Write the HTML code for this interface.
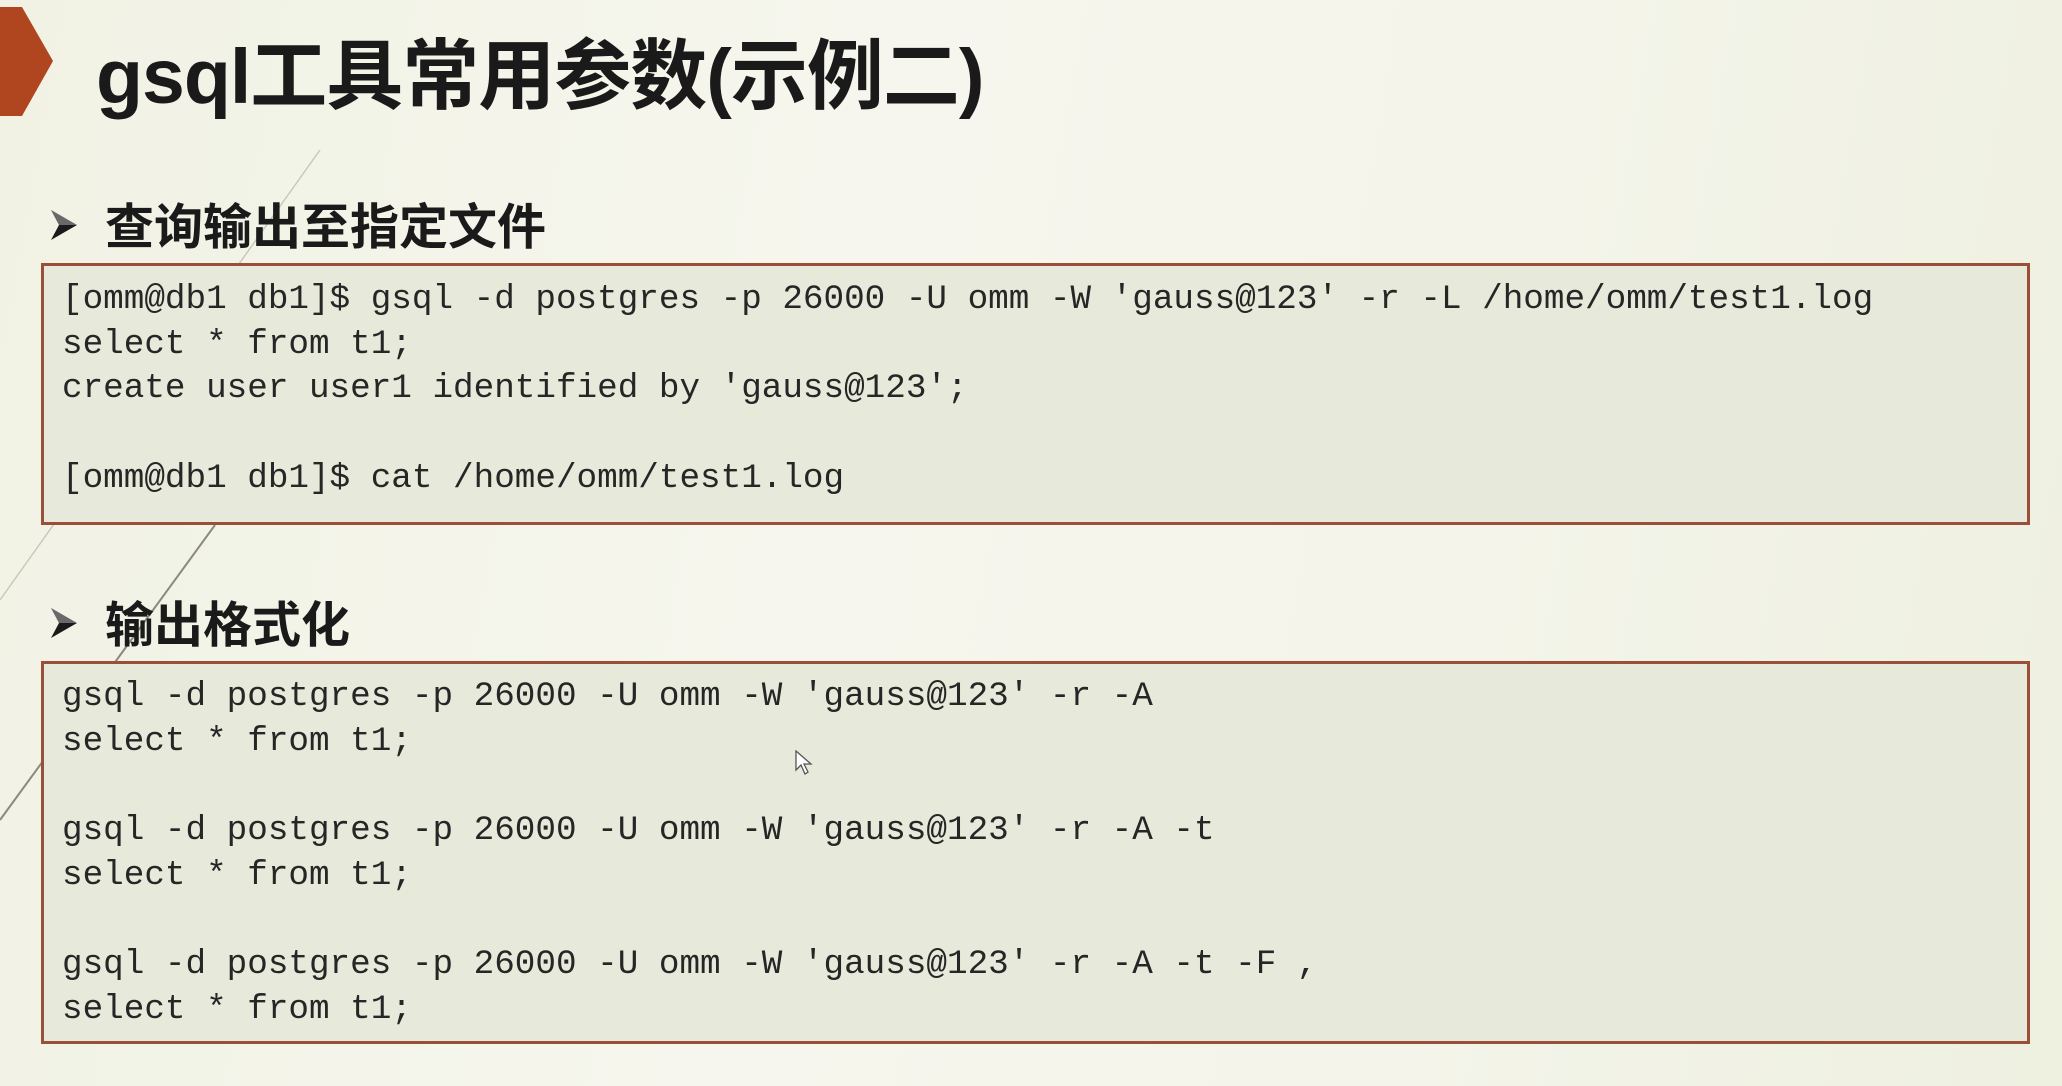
<!DOCTYPE html>
<html><head><meta charset="utf-8"><style>
html,body{margin:0;padding:0}
body{width:2062px;height:1086px;position:relative;overflow:hidden;
background:linear-gradient(100deg,#f1f2e4 0%,#f6f6ee 40%,#f4f4ea 70%,#eef0e0 100%);
font-family:"Liberation Sans","Noto Sans CJK SC",sans-serif;}
.t{position:absolute;left:96px;top:22px;font-size:77px;font-weight:bold;color:#1a1a1a;white-space:nowrap;line-height:110px;letter-spacing:-1px}
.h{position:absolute;left:105px;font-size:49px;font-weight:bold;color:#1a1a1a;white-space:nowrap;line-height:60px}
.arr{position:absolute;left:49px;width:30px;height:34px}
.box{position:absolute;left:41px;width:1989px;background:#e7eada;border:3px solid #9a5038;box-sizing:border-box}
.code{position:absolute;left:62px;font-family:"Liberation Mono",monospace;font-size:34.3px;color:#262626;white-space:pre;line-height:44.7px}
</style></head><body>
<svg style="position:absolute;left:0;top:0" width="2062" height="1086">
<polygon points="0,7 22,7 53,61 22,116 0,116" fill="#b0461f"/>
<line x1="320" y1="150" x2="0" y2="600" stroke="#c9c9bb" stroke-width="1.5"/>
<line x1="215" y1="525" x2="0" y2="820" stroke="#8a8a80" stroke-width="2"/>
</svg>
<div class="t">gsql工具常用参数(示例二)</div>
<svg class="arr" style="top:208px" viewBox="0 0 30 34"><polygon points="2,2 28,17 2,32 10,17" fill="#1a1a1a"/><polygon points="2,2 28,17 10,17" fill="#fff" opacity=".35"/></svg>
<div class="h" style="top:198px">查询输出至指定文件</div>
<div class="box" style="top:263px;height:262px"></div>
<div class="code" style="top:278px">[omm@db1 db1]$ gsql -d postgres -p 26000 -U omm -W 'gauss@123' -r -L /home/omm/test1.log
select * from t1;
create user user1 identified by 'gauss@123';

[omm@db1 db1]$ cat /home/omm/test1.log</div>
<svg class="arr" style="top:606px" viewBox="0 0 30 34"><polygon points="2,2 28,17 2,32 10,17" fill="#1a1a1a"/><polygon points="2,2 28,17 10,17" fill="#fff" opacity=".35"/></svg>
<div class="h" style="top:596px">输出格式化</div>
<div class="box" style="top:661px;height:383px"></div>
<div class="code" style="top:675px">gsql -d postgres -p 26000 -U omm -W 'gauss@123' -r -A
select * from t1;

gsql -d postgres -p 26000 -U omm -W 'gauss@123' -r -A -t
select * from t1;

gsql -d postgres -p 26000 -U omm -W 'gauss@123' -r -A -t -F ,
select * from t1;</div>
<svg style="position:absolute;left:795px;top:750px" width="18" height="26" viewBox="0 0 18 26"><path d="M1 1 L1 20 L6 15 L10 24 L13 22 L9 14 L16 14 Z" fill="#fff" stroke="#555" stroke-width="1.3"/></svg>
</body></html>
